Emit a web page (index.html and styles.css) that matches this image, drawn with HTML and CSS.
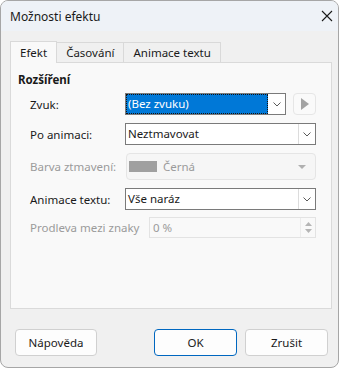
FILE: index.html
```html
<!DOCTYPE html>
<html lang="cs">
<head>
    <meta charset="UTF-8">
    <meta name="viewport" content="width=device-width, initial-scale=1.0">
    <title>Možnosti efektu</title>
    <link rel="stylesheet" href="styles.css">
</head>
<body>

    <div class="dialog">
        <div class="titlebar">
            <span class="title">Možnosti efektu</span>
            <svg class="close" width="12" height="12" viewBox="0 0 12 12">
                <path d="M1 1 L11 11 M11 1 L1 11" stroke="#1a1a1a" stroke-width="1.1" fill="none"/>
            </svg>
        </div>

        <div class="content">
            <div class="tabs">
                <div class="tab active">Efekt</div>
                <div class="tab">Časování</div>
                <div class="tab">Animace textu</div>
            </div>

            <div class="panel">
                <div class="group-title">Rozšíření</div>

                <div class="rows">
                    <div class="row row-sound">
                        <span class="label">Zvuk:</span>
                        <div class="combo combo-short">
                            <span class="value selected">(Bez zvuku)</span>
                            <span class="drop">
                                <svg width="8" height="5" viewBox="0 0 8 5"><path d="M0.5 0.5 L4 4 L7.5 0.5" stroke="#5a5a5a" fill="none"/></svg>
                            </span>
                        </div>
                        <div class="play">
                            <svg width="8" height="12" viewBox="0 0 8 12"><path d="M0 0 L8 6 L0 12 Z" fill="#a3a3a3"/></svg>
                        </div>
                    </div>

                    <div class="row">
                        <span class="label">Po animaci:</span>
                        <div class="combo">
                            <span class="value">Neztmavovat</span>
                            <span class="drop">
                                <svg width="8" height="5" viewBox="0 0 8 5"><path d="M0.5 0.5 L4 4 L7.5 0.5" stroke="#5a5a5a" fill="none"/></svg>
                            </span>
                        </div>
                    </div>

                    <div class="row row-color">
                        <span class="label disabled">Barva ztmavení:</span>
                        <div class="color-box">
                            <span class="swatch"></span>
                            <span class="color-name">Černá</span>
                            <svg class="tri" width="8" height="4" viewBox="0 0 8 4"><path d="M0 0 L8 0 L4 4 Z" fill="#b0b0b0"/></svg>
                        </div>
                    </div>

                    <div class="row">
                        <span class="label">Animace textu:</span>
                        <div class="combo">
                            <span class="value">Vše naráz</span>
                            <span class="drop">
                                <svg width="8" height="5" viewBox="0 0 8 5"><path d="M0.5 0.5 L4 4 L7.5 0.5" stroke="#5a5a5a" fill="none"/></svg>
                            </span>
                        </div>
                    </div>

                    <div class="row row-delay">
                        <span class="label label-wide disabled">Prodleva mezi znaky</span>
                        <div class="spin">
                            <span class="spin-value">0 %</span>
                            <span class="spin-buttons">
                                <svg width="7" height="4" viewBox="0 0 7 4"><path d="M0 4 L3.5 0 L7 4 Z" fill="#b5b5b5"/></svg>
                                <svg width="7" height="4" viewBox="0 0 7 4"><path d="M0 0 L7 0 L3.5 4 Z" fill="#b5b5b5"/></svg>
                            </span>
                        </div>
                    </div>
                </div>
            </div>

            <div class="buttons">
                <button class="btn">Nápověda</button>
                <div class="btn-group">
                    <button class="btn btn-default">OK</button>
                    <button class="btn">Zrušit</button>
                </div>
            </div>
        </div>
    </div>

</body>
</html>
```

FILE: styles.css
```css
/* dialog window */
body {
    margin: 0;
    font-family: "Segoe UI", "Noto Sans", sans-serif;
    font-size: 11.5px;
    color: #1a1a1a;
    background-color: #ffffff;
}

.dialog {
    width: 339px;
    height: 368px;
    box-sizing: border-box;
    border: 1px solid #a6a6a6;
    border-radius: 8px;
    background-color: #f0f0f0;
    overflow: hidden;
}

.titlebar {
    height: 30px;
    display: flex;
    align-items: center;
    justify-content: space-between;
    padding: 0 5px 0 9px;
    background-color: #eef2f7;
}

.title {
    font-size: 12px;
}

/* tabs + panel */
.content {
    padding: 10px 6px 0 9px;
}

.tabs {
    display: flex;
    align-items: flex-end;
    height: 21px;
}

.tab {
    height: 20px;
    line-height: 19px;
    padding: 0 9px;
    box-sizing: border-box;
    border: 1px solid #d9d9d9;
    border-bottom: none;
    margin-left: -1px;
    background-color: #f0f0f0;
}

.tab:first-child {
    margin-left: 0;
}

.tab.active {
    height: 22px;
    line-height: 21px;
    margin-bottom: -1px;
    background-color: #f9f9f9;
    position: relative;
    z-index: 1;
}

.panel {
    height: 247px;
    box-sizing: border-box;
    border: 1px solid #dadada;
    background-color: #f9f9f9;
    padding: 9px 15px 0 7px;
}

.group-title {
    font-weight: bold;
    line-height: 16px;
}

.rows {
    padding-left: 12px;
    margin-top: 5px;
}

.row {
    display: flex;
    align-items: center;
    height: 22px;
    margin-bottom: 8px;
}

.row-color {
    height: 27px;
}

.row-delay {
    height: 21px;
    margin-top: -1px;
}

.label {
    width: 95px;
    flex-shrink: 0;
}

.label-wide {
    width: 119px;
}

.disabled {
    color: #9b9b9b;
}

/* combo boxes */
.combo {
    flex: 1;
    height: 22px;
    box-sizing: border-box;
    border: 1px solid #7a7a7a;
    background-color: #ffffff;
    display: flex;
}

.combo-short {
    flex: none;
    width: 161px;
}

.value {
    flex: 1;
    line-height: 20px;
    padding-left: 2px;
}

.value.selected {
    background-color: #0078d7;
    color: #ffffff;
    border: 1px dotted #111111;
    line-height: 18px;
    padding-left: 1px;
}

.drop {
    width: 16px;
    border-left: 1px solid #dcdcdc;
    display: flex;
    align-items: center;
    justify-content: center;
}

.combo-short .drop {
    width: 17px;
    border-left: none;
}

.play {
    width: 23px;
    height: 22px;
    box-sizing: border-box;
    margin-left: 7px;
    border: 1px solid #e6e6e6;
    border-radius: 4px;
    background-color: #fafafa;
    display: flex;
    align-items: center;
    justify-content: center;
}

.color-box {
    flex: 1;
    margin-left: 1px;
    height: 27px;
    box-sizing: border-box;
    border: 1px solid #e5e5e5;
    border-radius: 4px;
    background-color: #f6f6f6;
    display: flex;
    align-items: center;
    padding: 0 9px 0 2px;
    color: #9b9b9b;
}

.swatch {
    width: 28px;
    height: 11px;
    background-color: #a0a0a0;
    margin-right: 6px;
}

.color-name {
    flex: 1;
}

/* spin box */
.spin {
    width: 168px;
    height: 21px;
    box-sizing: border-box;
    border: 1px solid #e3e3e3;
    background-color: #f9f9f9;
    display: flex;
    color: #9b9b9b;
}

.spin-value {
    flex: 1;
    line-height: 19px;
    padding-left: 3px;
}

.spin-buttons {
    width: 15px;
    border-left: 1px solid #ececec;
    display: flex;
    flex-direction: column;
    align-items: center;
    justify-content: space-around;
    padding: 2px 0;
    box-sizing: border-box;
}

/* bottom buttons */
.buttons {
    display: flex;
    justify-content: space-between;
    margin-top: 20px;
    padding: 0 4px 0 5px;
}

.btn-group {
    display: flex;
    gap: 8px;
}

.btn {
    width: 82px;
    height: 27px;
    font-family: inherit;
    font-size: 11.5px;
    color: #1a1a1a;
    background-color: #fdfdfd;
    border: 1px solid #d0d0d0;
    border-radius: 4px;
    padding: 0;
}

.btn-group .btn {
    width: 83px;
}

.btn-default {
    border-color: #0067c0;
}
```
